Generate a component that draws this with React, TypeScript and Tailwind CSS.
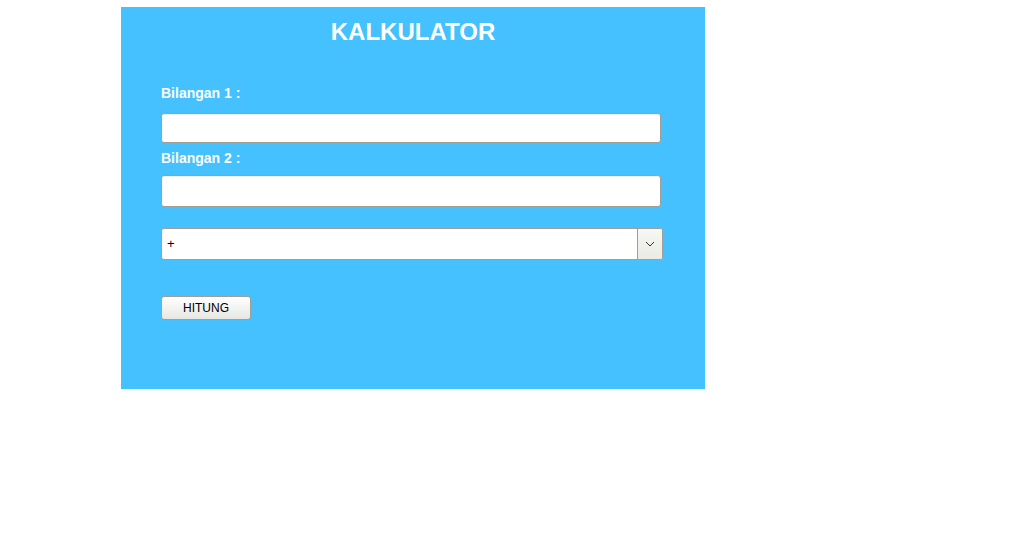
import React from "react";

export default function App() {
  const font = { fontFamily: '"Liberation Sans", Arial, sans-serif' };
  return (
    <div className="w-[1028px] h-[544px] bg-white" style={font}>
      <div className="ml-[121px] pt-[7px]">
        <div className="w-[584px] h-[382px] bg-[#44c1fe] flex flex-col">
          <h1 className="mt-[11px] text-center text-[24px] leading-[28px] font-bold text-white">
            KALKULATOR
          </h1>
          <div className="pl-[40px] flex flex-col">
            <label className="mt-[39px] text-[14px] leading-[16px] font-bold text-white">
              Bilangan 1 :
            </label>
            <div className="mt-[12px] w-[500px] h-[30px] bg-white border border-[#a39e95] rounded-[3px] shadow-[inset_0_1px_1px_rgba(0,0,0,0.08)]" />
            <label className="mt-[7px] text-[14px] leading-[16px] font-bold text-white">
              Bilangan 2 :
            </label>
            <div className="mt-[9px] w-[500px] h-[32px] bg-white border border-[#a39e95] rounded-[3px] shadow-[inset_0_1px_1px_rgba(0,0,0,0.08)]" />
            <div className="mt-[21px] w-[502px] h-[32px] bg-white border border-[#a39e95] rounded-[3px] flex items-stretch overflow-hidden">
              <div className="flex-1 flex items-center pl-[5px] text-[13px] text-black">+</div>
              <div className="w-[25px] border-l border-[#a39e95] bg-gradient-to-b from-[#f7f7f3] to-[#ebebe4] flex items-center justify-center">
                <svg width="10" height="6" viewBox="0 0 10 6">
                  <path d="M1 1 L5 5 L9 1" fill="none" stroke="#333" strokeWidth="1" />
                </svg>
              </div>
            </div>
            <button className="mt-[36px] w-[90px] h-[24px] rounded-[3px] border border-[#a39e95] bg-gradient-to-b from-[#ffffff] to-[#e6e6e2] text-[12px] leading-[14px] text-black flex items-center justify-center">
              HITUNG
            </button>
          </div>
        </div>
      </div>
    </div>
  );
}
